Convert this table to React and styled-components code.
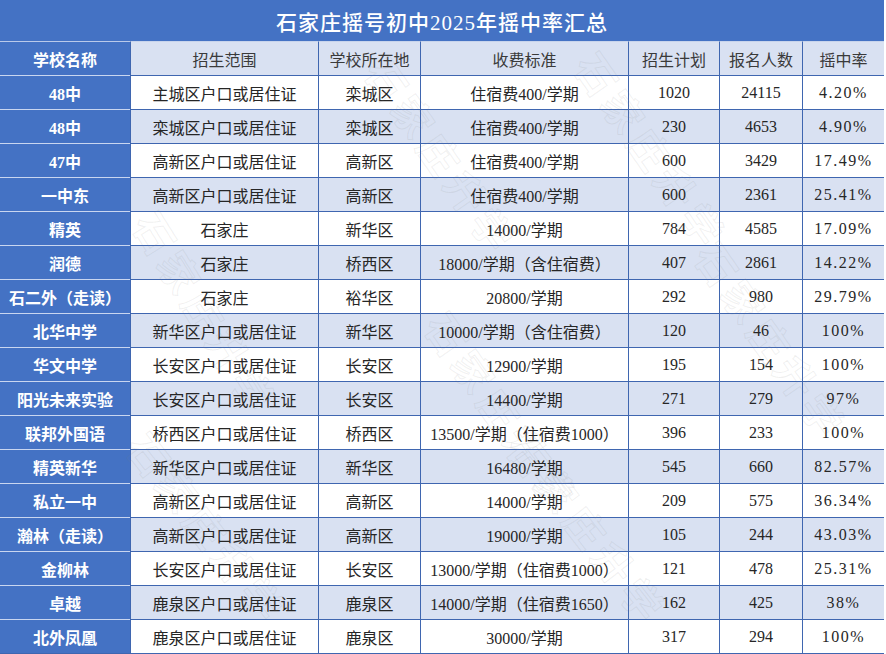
import React from "react";
import styled, { createGlobalStyle } from "styled-components";

const Global = createGlobalStyle`
  html, body { margin: 0; padding: 0; background: #ffffff; }
  body { font-family: "Liberation Serif", "Noto Sans CJK SC", serif; }
`;

const BLUE = "#4472c4";
const LIGHT = "#d9e1f2";
const LINE = "#3f66b0";

const Sheet = styled.div`
  position: relative;
  width: 884px;
  overflow: hidden;
  background: #fff;
`;

const Title = styled.div`
  height: 41px;
  background: ${BLUE};
  color: #fff;
  display: flex;
  align-items: center;
  justify-content: center;
  font-family: "Liberation Serif", "Noto Sans CJK SC", serif;
  font-size: 21px;
  font-weight: 500;
  letter-spacing: 1px;
  padding-top: 1px;
  box-sizing: border-box;
`;

const Grid = styled.div`
  display: grid;
  grid-template-columns: 130px 188px 102px 208px 91px 83px 82px;
  grid-auto-rows: 34px;
  border-bottom: 1px solid ${LINE};
  border-right: 1px solid ${LINE};
  box-sizing: border-box;
`;

const Cell = styled.div`
  box-sizing: border-box;
  display: flex;
  align-items: center;
  justify-content: center;
  white-space: nowrap;
  font-family: "Liberation Serif", "Noto Sans CJK SC", serif;
  font-size: 16px;
  color: ${(p) => (p.$head ? "#3a3a3a" : "#262626")};
  background: ${(p) => (p.$alt || p.$head ? LIGHT : "#fff")};
  border-top: 1px solid ${(p) => (p.$head ? "#c8d4ec" : LINE)};
  border-left: 1px solid ${LINE};
  padding-top: 1px;
`;

const NameCell = styled.div`
  box-sizing: border-box;
  display: flex;
  align-items: center;
  justify-content: center;
  white-space: nowrap;
  background: ${BLUE};
  color: #fff;
  font-family: "Liberation Serif", "Noto Sans CJK SC", serif;
  font-size: 16px;
  font-weight: 700;
  border-top: 1px solid ${(p) => (p.$head ? "#b9c9ea" : "#c9d6f0")};
  padding-top: 1px;
`;

const Pct = styled.span`
  letter-spacing: 1.5px;
`;

const Mark = styled.div`
  position: absolute;
  pointer-events: none;
  font-family: "Noto Sans CJK SC", sans-serif;
  font-size: 40px;
  font-weight: 700;
  color: transparent;
  -webkit-text-stroke: 1px rgba(130, 130, 130, 0.12);
  transform: rotate(${(p) => p.$rot}deg);
  transform-origin: left top;
  white-space: nowrap;
  letter-spacing: 6px;
`;

const headers = ["招生范围", "学校所在地", "收费标准", "招生计划", "报名人数", "摇中率"];

const rows = [
  ["48中", "主城区户口或居住证", "栾城区", "住宿费400/学期", "1020", "24115", "4.20%"],
  ["48中", "栾城区户口或居住证", "栾城区", "住宿费400/学期", "230", "4653", "4.90%"],
  ["47中", "高新区户口或居住证", "高新区", "住宿费400/学期", "600", "3429", "17.49%"],
  ["一中东", "高新区户口或居住证", "高新区", "住宿费400/学期", "600", "2361", "25.41%"],
  ["精英", "石家庄", "新华区", "14000/学期", "784", "4585", "17.09%"],
  ["润德", "石家庄", "桥西区", "18000/学期（含住宿费）", "407", "2861", "14.22%"],
  ["石二外（走读）", "石家庄", "裕华区", "20800/学期", "292", "980", "29.79%"],
  ["北华中学", "新华区户口或居住证", "新华区", "10000/学期（含住宿费）", "120", "46", "100%"],
  ["华文中学", "长安区户口或居住证", "长安区", "12900/学期", "195", "154", "100%"],
  ["阳光未来实验", "长安区户口或居住证", "长安区", "14400/学期", "271", "279", "97%"],
  ["联邦外国语", "桥西区户口或居住证", "桥西区", "13500/学期（住宿费1000）", "396", "233", "100%"],
  ["精英新华", "新华区户口或居住证", "新华区", "16480/学期", "545", "660", "82.57%"],
  ["私立一中", "高新区户口或居住证", "高新区", "14000/学期", "209", "575", "36.34%"],
  ["瀚林（走读）", "高新区户口或居住证", "高新区", "19000/学期", "105", "244", "43.03%"],
  ["金柳林", "长安区户口或居住证", "长安区", "13000/学期（住宿费1000）", "121", "478", "25.31%"],
  ["卓越", "鹿泉区户口或居住证", "鹿泉区", "14000/学期（住宿费1650）", "162", "425", "38%"],
  ["北外凤凰", "鹿泉区户口或居住证", "鹿泉区", "30000/学期", "317", "294", "100%"],
];

const marks = [
  { x: 170, y: 200, rot: 58 },
  { x: 400, y: 45, rot: 55 },
  { x: 610, y: 40, rot: 55 },
  { x: 730, y: 230, rot: 55 },
  { x: 460, y: 300, rot: 55 },
  { x: 160, y: 420, rot: 52 },
  { x: 540, y: 420, rot: 52 },
];

export default function App() {
  return (
    <>
      <Global />
      <Sheet>
        <Title>石家庄摇号初中2025年摇中率汇总</Title>
        <Grid>
          <NameCell $head>学校名称</NameCell>
          {headers.map((h) => (
            <Cell key={h} $head>
              {h}
            </Cell>
          ))}
          {rows.map((r, i) => (
            <React.Fragment key={i}>
              <NameCell>{r[0]}</NameCell>
              {r.slice(1).map((v, j) => (
                <Cell key={j} $alt={i % 2 === 1}>
                  {j === 5 ? <Pct>{v}</Pct> : v}
                </Cell>
              ))}
            </React.Fragment>
          ))}
        </Grid>
        {marks.map((m, i) => (
          <Mark key={i} $rot={m.rot} style={{ left: m.x, top: m.y }}>
            石家庄升学
          </Mark>
        ))}
      </Sheet>
    </>
  );
}
